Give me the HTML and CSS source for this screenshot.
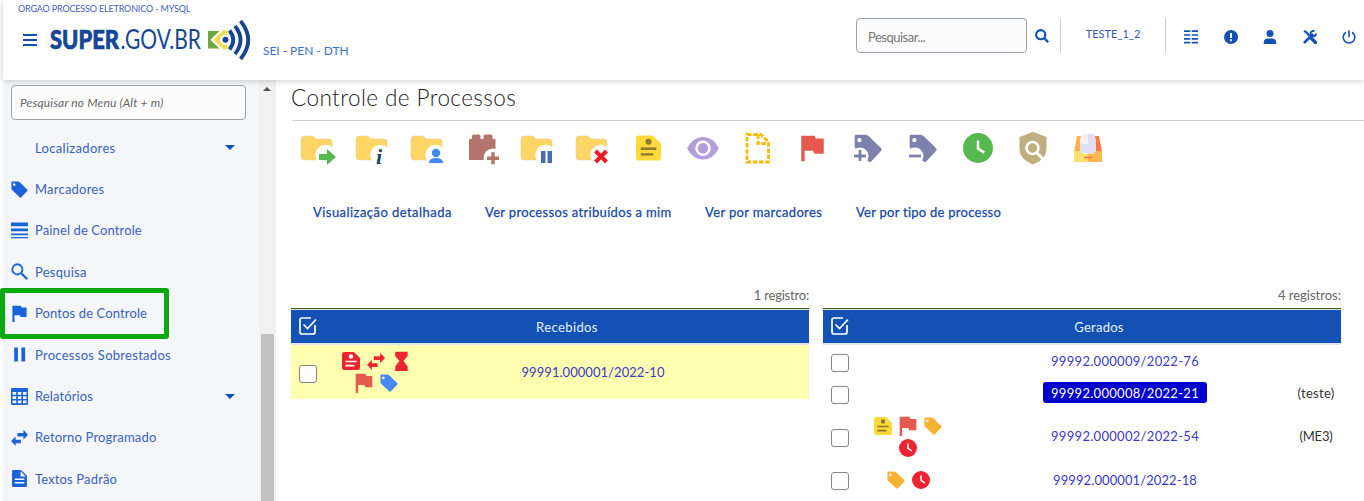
FILE: index.html
```html
<!DOCTYPE html>
<html lang="pt-BR">
<head>
<meta charset="utf-8">
<title>Controle de Processos</title>
<link rel="stylesheet" href="styles.css">
</head>
<body>
<svg class="defs" aria-hidden="true">
  <symbol id="tag" viewBox="2 1.500 21.500 21.500"><path fill-rule="evenodd" d="M3 2h8l2 1 9.500 9.200q.8 1 0 2L15 22.200q-1 .8-2 0L3.300 13 2.500 11V3.500Q2.500 2 3 2zM6 4.500a1.600 1.600 0 1 0 .1 0z"/></symbol>
  <symbol id="flag" viewBox="0 0 24 24"><path d="M2 1h12l.8 2.500H22V17h-8.500l-1-2.500H5V24H2z"/></symbol>
  <symbol id="swap" viewBox="0 0 24 24"><path d="M24 8l-6.500-7v4.500H9v5h8.500V15zM0 17l6.500-6.500V15h7.500v5H6.500v4z"/></symbol>
  <symbol id="clock" viewBox="0 0 24 24"><circle cx="12" cy="12" r="12"/><path d="M12 6v6.500l5 3.200" fill="none" stroke="#fff" stroke-width="2"/></symbol>
  <symbol id="note" viewBox="0 0 24 24"><path d="M3 0h13l8 8v13q0 3-3 3H3q-3 0-3-3V3q0-3 3-3z"/><g fill="var(--ink)"><circle cx="12" cy="6" r="2.900"/><path d="M4.500 11.500h15v2.300h-15zM4.500 17h12v2.300h-12z"/></g></symbol>
  <symbol id="folder" viewBox="0 0 36 36"><path d="M4 5h8q1 0 2 1l2 2h13q3 0 3 3v15q0 3-3 3H4q-3 0-3-3V8q0-3 3-3z" fill="#ffd666" stroke="#d9cf95" stroke-width=".5"/><circle cx="25.500" cy="24" r="10.200" fill="#fff"/></symbol>
  <symbol id="checkall" viewBox="0 0 18 18"><path d="M12 1H3Q1 1 1 3v12q0 2 2 2h11q2 0 2-2V8M4.500 7.500l4 4L17 2.500" fill="none" stroke="#fff" stroke-width="1.700"/></symbol>
</svg>

<header class="top">
  <div class="org">ORGAO PROCESSO ELETRONICO - MYSQL</div>
  <div class="bar">
    <svg class="burger" viewBox="0 0 14 12"><path d="M0 1h14M0 6h14M0 11h14" stroke="#1351b4" stroke-width="1.800"/></svg>
    <svg class="logo" viewBox="0 0 204 42">
      <text x="1" y="30.500" class="logo-bold" textLength="69" lengthAdjust="spacingAndGlyphs">SUPER</text>
      <text x="71.500" y="30.500" class="logo-thin" textLength="80.500" lengthAdjust="spacingAndGlyphs">.GOV.BR</text>
      <path d="M159 13h16v17.500h-16z" fill="#72a63f"/>
      <path d="M161.500 21.700l11-10.700h6v21.500h-6z" fill="#fff"/>
      <path d="M164.500 21.700l10-9.500h4v19h-4z" fill="#f5dc4a"/>
      <circle cx="176.500" cy="21.700" r="5.300" fill="#fff"/>
      <circle cx="176.500" cy="21.700" r="3" fill="#154694"/>
      <g fill="none" stroke="#154694" stroke-width="3.800"><path d="M180.500 12.500q7.500 9.500 0 19"/><path d="M186 8q11 14 0 28"/><path d="M191.500 3q15.500 19 0 38"/></g>
    </svg>
    <span class="unit">SEI - PEN - DTH</span>
    <div class="search">Pesquisar...</div>
    <svg class="lens" viewBox="0 0 14 14"><circle cx="5.700" cy="5.700" r="4.600" fill="none" stroke="#1351b4" stroke-width="2.100"/><path d="M9 9l4.200 4.200" stroke="#1351b4" stroke-width="2.400"/></svg>
    <div class="user">TESTE_1_2</div>
    <div class="tools">
      <svg viewBox="0 0 14 14"><path d="M0 1.200h6.300M7.700 1.200H14M0 5h6.300M7.700 5H14M0 8.800h6.300M7.700 8.800H14M0 12.600h6.300M7.700 12.600H14" stroke="#1351b4" stroke-width="1.700"/></svg>
      <svg viewBox="0 0 14 14"><circle cx="7" cy="7" r="7" fill="#1351b4"/><path d="M7 3v5M7 9.200v2" stroke="#fff" stroke-width="1.900"/></svg>
      <svg viewBox="0 0 14 14"><circle cx="7" cy="3.500" r="3.500" fill="#1351b4"/><path d="M.8 14v-1.500Q.8 8.500 5 8.500h4q4.200 0 4.200 4V14z" fill="#1351b4"/></svg>
      <svg viewBox="0 0 14 14"><g stroke="#1351b4" fill="none"><path d="M1 1l2 1 3.500 4" stroke-width="2.200"/><path d="M8.500 8.500l4 4" stroke-width="3.400" stroke-linecap="round"/><path d="M1.700 12.300L9.500 4.800" stroke-width="2.600" stroke-linecap="round"/><path d="M11.500 1.200A2.700 2.700 0 1 0 13 3.600" stroke-width="2"/></g></svg>
      <svg viewBox="0 0 14 14"><path d="M4 2.200a5.800 5.800 0 1 0 6 0M7 .3v7" fill="none" stroke="#1351b4" stroke-width="1.600"/></svg>
    </div>
  </div>
</header>

<div class="page">
  <aside class="side">
    <div class="menu-search">Pesquisar no Menu (Alt + m)</div>
    <nav class="menu">
      <a><i></i><span class="m1">Localizadores</span><b class="caret"></b></a>
      <a><svg><use href="#tag"/></svg><span class="m2">Marcadores</span></a>
      <a><svg viewBox="0 0 16 16"><path d="M0 .5h16V4H0zM0 6h16v2.800H0zM0 10.800h16v1.700H0zM0 14.200h16v1H0z"/></svg><span class="m3">Painel de Controle</span></a>
      <a><svg viewBox="0 0 16 16"><path d="M10 10l5.300 5.300" stroke="#1a63d8" stroke-width="2"/><circle cx="6" cy="6" r="4.800" fill="none" stroke="#1a63d8" stroke-width="1.700"/></svg><span class="m4">Pesquisa</span></a>
      <a class="marked"><svg><use href="#flag"/></svg><span class="m5">Pontos de Controle</span></a>
      <a><svg viewBox="0 0 16 16"><path d="M3 1.500h3.500v13H3zM9.800 1.500h3.500v13H9.800z"/></svg><span class="m6">Processos Sobrestados</span></a>
      <a><svg viewBox="0 0 16 16"><path fill-rule="evenodd" d="M1 0h14q1 0 1 1v14q0 1-1 1H1q-1 0-1-1V1q0-1 1-1zM1.500 3.800v2.500h3.400V3.800zm4.900 0v2.500h3.400V3.800zm4.900 0v2.500h3.300V3.800zM1.500 7.800v2.500h3.400V7.800zm4.900 0v2.500h3.400V7.800zm4.900 0v2.500h3.300V7.800zM1.500 11.800v2.500h3.400v-2.500zm4.900 0v2.500h3.400v-2.500zm4.900 0v2.500h3.300v-2.500z"/></svg><span class="m7">Relatórios</span><b class="caret"></b></a>
      <a><svg><use href="#swap"/></svg><span class="m8">Retorno Programado</span></a>
      <a><svg viewBox="0 0 16 16"><path fill-rule="evenodd" d="M2 0h7.500L15 5.500V15q0 1-1 1H2q-1 0-1-1V1q0-1 1-1zM9 1.200V6h4.800zM3.500 8v1.400h9V8zm0 3.200v1.400h9v-1.400z"/></svg><span class="m9">Textos Padrão</span></a>
    </nav>
  </aside>
  <div class="scroll"><b class="up"></b><div class="thumb"></div></div>

  <main>
    <h1>Controle de Processos</h1>
    <div class="actions">
      <svg viewBox="0 0 36 36"><use href="#folder"/><path d="M19 23h8v-5l9 8-9 8v-5h-8z" fill="#55b94e"/></svg>
      <svg viewBox="0 0 36 36"><use href="#folder"/><text x="21" y="32.500" class="info">i</text></svg>
      <svg viewBox="0 0 36 36"><use href="#folder"/><circle cx="26" cy="22" r="4.200" fill="#4489f7"/><path d="M19 32q0-5 7-5t7 5z" fill="#4489f7"/></svg>
      <svg viewBox="0 0 36 36"><path d="M4 8h3V5q0-1.500 1.500-1.500H14q1.500 0 1.500 1.500v3h3V5q0-1.500 1.500-1.500h6q1.500 0 1.500 1.500v3h3v21H4z" fill="#b3736e"/><circle cx="28" cy="27" r="9.500" fill="#fff"/><path d="M22 27.300h12M28 21.300v12" stroke="#b3736e" stroke-width="3.400"/></svg>
      <svg viewBox="0 0 36 36"><use href="#folder"/><path d="M21 20h4.500v12H21zM27.500 20H32v12h-4.500z" fill="#4a6db0"/></svg>
      <svg viewBox="0 0 36 36"><use href="#folder"/><path d="M20.500 20l11 11M31.500 20l-11 11" stroke="#ed1c24" stroke-width="4"/></svg>
      <svg viewBox="-6 -4 36 36" class="yellow"><use href="#note" width="25" height="26" y="0"/></svg>
      <svg viewBox="0 0 36 36"><path d="M2 17.300Q8 6 18 6t16 11.300Q28 28.500 18 28.500T2 17.300z" fill="#b39ddb"/><circle cx="18" cy="17.300" r="6.500" fill="#b39ddb" stroke="#fff" stroke-width="2.500"/></svg>
      <svg viewBox="0 0 36 36"><path d="M7 3.500h14l7.500 7.500v20H7zM18 3.500v9h10.500" fill="none" stroke="#ffb90a" stroke-width="2.900" stroke-dasharray="4.500 1.700"/></svg>
      <svg viewBox="0 0 36 36" class="coral"><use href="#flag" x="4" y="3.500" width="27" height="27"/></svg>
      <svg viewBox="0 0 36 36" class="slate"><use href="#tag" x="4" y="3" width="28.500" height="28.500"/><circle cx="10" cy="25" r="8.500" fill="#fff"/><path d="M4 25h12M10 19v11" stroke="#7c82ab" stroke-width="2.800"/></svg>
      <svg viewBox="0 0 36 36" class="slate"><use href="#tag" x="4" y="3" width="28.500" height="28.500"/><circle cx="10" cy="25" r="8.500" fill="#fff"/><path d="M4 25h12" stroke="#7c82ab" stroke-width="2.800"/></svg>
      <svg viewBox="0 0 36 36" class="green"><use href="#clock" x="3" y="2" width="30" height="30"/></svg>
      <svg viewBox="0 0 36 36"><path d="M18 .8L31.500 6v12Q31.500 28 18 33.500 4.500 28 4.500 18V6z" fill="#bfae7e"/><circle cx="17.500" cy="17" r="6" fill="none" stroke="#fff" stroke-width="2.600"/><path d="M21.500 21.500l6.500 6.500" stroke="#fff" stroke-width="3"/></svg>
      <svg viewBox="0 0 36 36"><path d="M7 5h4v16H4z" fill="#ffb04f"/><path d="M25 5h4l3 16h-7z" fill="#ff7840"/><path d="M12 3h6v20h-8V8z" fill="#f9eff3"/><path d="M18 3h6l2 6v14h-8z" fill="#e4dcf2"/><path d="M10 13h8v9h-8z" fill="#dedff6"/><path d="M4 20h6l3 3h5v8H4z" fill="#ffe070"/><path d="M18 23h5l3-3h6v11H18z" fill="#ffb850"/><path d="M14 26.500h8.500" stroke="#ff7840" stroke-width="1.600"/></svg>
    </div>
    <div class="views"><a class="v1">Visualização detalhada</a><a class="v2">Ver processos atribuídos a mim</a><a class="v3">Ver por marcadores</a><a class="v4">Ver por tipo de processo</a></div>

    <div class="tables">
      <section>
        <div class="caption"><span class="c1">1 registro:</span></div>
        <div class="thead"><svg><use href="#checkall"/></svg><span class="h1t">Recebidos</span></div>
        <div class="row tall received"><i class="box"></i>
          <div class="marks"><svg class="red note"><use href="#note"/></svg><svg class="red swap"><use href="#swap"/></svg><svg class="red" viewBox="0 0 24 24"><path d="M5 1h15v5L15 12l5 6.500V24H5v-5.500L10 12 5 6z"/></svg><svg class="coral"><use href="#flag"/></svg><svg class="blue"><use href="#tag"/></svg></div>
          <a class="num n0">99991.000001/2022-10</a></div>
      </section>
      <section>
        <div class="caption"><span class="c2">4 registros:</span></div>
        <div class="thead"><svg><use href="#checkall"/></svg><span class="h2t">Gerados</span></div>
        <div class="row first"><i class="box"></i><div class="marks"></div><a class="num n1">99992.000009/2022-76</a></div>
        <div class="row second"><i class="box"></i><div class="marks"></div><a class="num n1"><span class="chip">99992.000008/2022-21</span></a><span class="who w1">(teste)</span></div>
        <div class="row tall"><i class="box"></i>
          <div class="marks"><svg class="yellow note"><use href="#note"/></svg><svg class="coral"><use href="#flag"/></svg><svg class="orange"><use href="#tag"/></svg><svg class="red round"><use href="#clock"/></svg></div>
          <a class="num n1">99992.000002/2022-54</a><span class="who w2">(ME3)</span></div>
        <div class="row last"><i class="box"></i><div class="marks"><svg class="orange"><use href="#tag"/></svg><svg class="red round"><use href="#clock"/></svg></div><a class="num n2">99992.000001/2022-18</a></div>
      </section>
    </div>
  </main>
</div>
</body>
</html>
```
FILE: styles.css
```css
*, *::before { box-sizing: border-box; }
body { margin: 0; height: 501px; overflow: hidden; background: #fff; font: 300 13px/18px Lato, sans-serif; color: #333; }
.defs { display: block; width: 0; height: 0; }
.top { position: relative; height: 80px; margin-left: 3px; background: #fff; box-shadow: 0 1px 6px rgba(0,0,0,.2); color: #1351b4; }
.org { padding: 2px 0 0 15px; height: 16px; font-size: 9px; line-height: 13px; font-weight: 400; color: #3e62b8; letter-spacing: -.16px; }
.bar { display: flex; align-items: flex-start; padding: 2px 7px 0 20px; }
.burger { width: 14px; height: 12px; margin-top: 16px; }
.logo { width: 204px; height: 42px; margin-left: 12px; }
.logo-bold { font: 900 26px Lato; fill: #154694; stroke: #154694; stroke-width: .7px; }
.logo-thin { font: 400 26px Lato; fill: #154694; }
.unit { margin: 24px 0 0 10px; width: 90px; font-size: 12px; font-weight: 400; white-space: nowrap; color: #3e6fc8; letter-spacing: -.05px; }
.search { width: 171px; height: 35px; margin-left: 503px; padding: 10px 11px 0; border: 1px solid #9ba3a7; border-radius: 4px; background: #fcfcfc; color: #777; line-height: 17px; font-weight: 400; letter-spacing: -.5px; }
.lens { width: 14px; height: 14px; margin: 11px 11px 0 8px; }
.user { width: 106px; height: 35px; border: 1px solid #ccc; border-width: 0 1px; text-align: center; font-size: 11px; line-height: 32px; font-weight: 400; color: #3558b5; }
.tools { display: flex; justify-content: space-between; width: 172px; margin: 12px 0 0 18px; }
.tools svg { width: 14px; height: 14px; flex: none; }

.page { display: flex; height: 421px; padding-left: 3px; }
.side { width: 256px; padding: 5px 0 0 8px; background: #f4f6f9; }
.menu-search { width: 235px; height: 35px; padding: 8px 8px; border: 1px solid #9fa3a6; border-radius: 4px; background: #fcfcfc; color: #666; font-size: 12px; font-weight: 400; font-style: italic; line-height: 18px; letter-spacing: .15px; }
.menu { padding-top: 7px; }
.menu a { position: relative; display: flex; align-items: center; height: 41.400px; color: #3862bd; font-weight: 400; }
.menu svg, .menu i { width: 17px; height: 17px; margin-right: 7px; fill: #1a63d8; }
.m1 { letter-spacing: .32px; } .m2 { letter-spacing: .22px; } .m3 { letter-spacing: .12px; }
.m4 { letter-spacing: .25px; } .m5 { letter-spacing: .12px; } .m6 { letter-spacing: .28px; }
.m7 { letter-spacing: .1px; } .m8 { letter-spacing: .17px; } .m9 { letter-spacing: .15px; }
.caret { margin-left: auto; margin-right: 24px; border: 5px solid transparent; border-top-color: #1351b4; border-bottom: 0; }
.marked::before { content: ""; position: absolute; left: -11px; top: -4.500px; width: 169px; height: 51px; border: 5px solid #0ba80f; border-radius: 3px; }
.scroll { width: 17px; padding: 7px 2px 0; background: #f1f1f1; }
.up { display: block; width: 0; margin-left: 2px; border: 4px solid transparent; border-top: 0; border-bottom-color: #505050; }
.thumb { width: 13px; height: 170px; margin-top: 243px; background: #c1c1c1; }

main { flex: 1; padding-left: 15px; }
h1 { margin: 4px 0 8px; font-size: 22.500px; line-height: 28px; font-weight: 300; color: #222; letter-spacing: .42px; }
.actions { display: flex; height: 62px; padding: 10px 0 0 8px; border-top: 1px solid #ccc; border-left: 1px solid transparent; border-radius: 4px 0 0 0; gap: 19px; }
.actions svg { width: 36px; height: 36px; flex: none; overflow: visible; }
.info { font: italic bold 22px/1 "Liberation Serif"; fill: #1d4760; }
.views { display: flex; padding: 21px 0 0 22px; color: #1747a6; }
.views a { white-space: nowrap; font-weight: 400; -webkit-text-stroke: .25px #1747a6; }
.v1 { width: 172px; letter-spacing: .45px; } .v2 { width: 220px; letter-spacing: .33px; }
.v3 { width: 151px; letter-spacing: .35px; } .v4 { letter-spacing: .26px; }
.tables { display: flex; gap: 14px; padding-top: 65px; }
section { width: 518px; }
.caption { height: 22px; text-align: right; color: #666; font-weight: 400; line-height: 19px; }
.c1 { letter-spacing: -.2px; }
.thead { display: flex; position: relative; align-items: center; height: 37px; border-top: 1px solid #435a10; border-bottom: 2px solid #dfe3ed; background: #1351b4; background-clip: padding-box; color: #e8eefa; justify-content: center; padding: 2px 0 0 34px; font-weight: 400; box-shadow: inset 0 1px #e5e9f2; }
.thead svg { position: absolute; left: 8px; top: 8px; width: 18px; height: 18px; }
.h1t { letter-spacing: .4px; } .h2t { letter-spacing: .25px; }
.row { display: flex; align-items: center; }
.box { flex: none; width: 18px; height: 18px; margin: 2px 0 0 8px; border: 1px solid #858585; border-radius: 3px; background: #fff; }
.received .box { margin-top: 3px; }
.marks { display: flex; flex: none; flex-wrap: wrap; justify-content: center; width: 90px; margin: -1px 1px 0 14px; gap: 2px 5px; padding: 0 2px; }
.marks svg { width: 20px; height: 20px; flex: none; }
.marks .note, .marks .swap { width: 18px; height: 18px; margin: 1px; }
.marks .round, .marks .orange, .marks .blue { width: 18px; height: 18px; margin: 1px; }
.num { flex: none; width: 340px; margin: -2px 0 0 1px; text-align: center; font-weight: 400; color: #3a3ac8; }
.n0 { margin-top: 0; letter-spacing: .05px; } .n1 { letter-spacing: .3px; } .n2 { letter-spacing: .1px; margin-top: 0; }
.received { background: #ffffb0; }
.tall { height: 54px; } .first { height: 33px; } .second { height: 32px; } .last { height: 32px; }
.last .box { margin-top: 1px; }
.chip { display: inline-block; width: 164px; height: 21px; line-height: 22px; border-radius: 3px; background: #0000cd; color: #fff; font-weight: 400; }
.second .num { margin-top: -3px; }
.who { width: 40px; margin-left: 1px; text-align: center; font-weight: 400; margin-top: -2px; }
.w1 { letter-spacing: .3px; } .w2 { letter-spacing: -.2px; }
.red { fill: #ed2530; --ink: #fff; } .coral { fill: #e6594f; } .orange { fill: #f7b233; } .blue { fill: #4489f7; }
.yellow { fill: #fdd93b; --ink: #8b792f; } .slate { fill: #7c82ab; } .green { fill: #55b94e; }
```
